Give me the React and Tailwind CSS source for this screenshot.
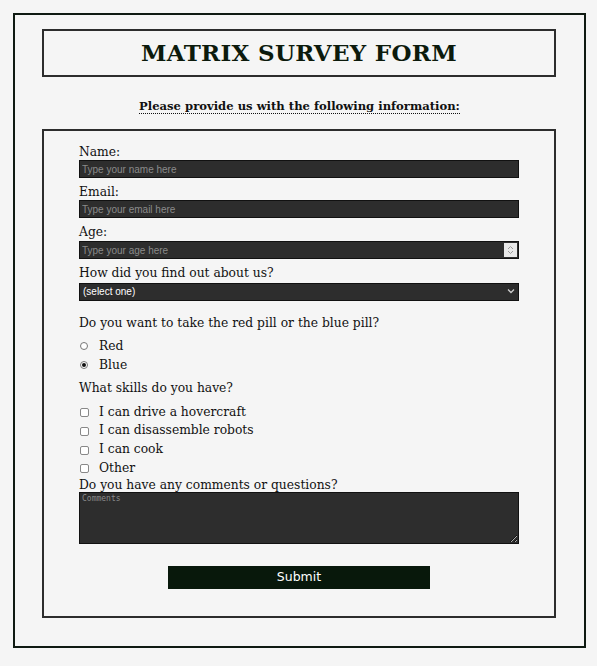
const serif = { fontFamily: '"DejaVu Serif", serif' }

function Field({ label, placeholder, children }) {
  return (
    <div className="mb-[6px]">
      <label className="block h-4 text-[12.3px] leading-4 text-[#111]">{label}</label>
      {children || (
        <input
          type="text"
          placeholder={placeholder}
          className="block w-[440px] h-[18px] bg-[#2d2d2d] border border-[#111] px-[2px] text-[10px] text-white placeholder:text-[#8a8a8a] outline-none font-['Liberation_Sans',sans-serif]"
        />
      )}
    </div>
  )
}

function Radio({ checked, label }) {
  return (
    <div className="flex items-center h-[19px]">
      <span className="w-[8px] h-[8px] ml-[1px] rounded-full border border-[#777] bg-white flex items-center justify-center">
        {checked && <span className="w-[4px] h-[4px] rounded-full bg-[#111]" />}
      </span>
      <span className="ml-[11px] text-[12.3px] text-[#111]">{label}</span>
    </div>
  )
}

function Check({ label }) {
  return (
    <div className="flex items-center h-[18.7px]">
      <span className="w-[9px] h-[9px] ml-[1px] mt-[2px] rounded-[2px] border border-[#888] bg-white" />
      <span className="ml-[10px] text-[12.3px] text-[#111]">{label}</span>
    </div>
  )
}

export default function App() {
  return (
    <div className="min-h-screen bg-[#f5f5f5] pt-[13px] pb-[17px]" style={serif}>
      <div className="ml-[13px] w-[573px] border-2 border-[#0f1a12] pt-[14px] pb-[28px] px-[27px]">

        {/* Header */}
        <div className="w-[514px] h-[48px] border-2 border-[#2d2d2d] flex items-center justify-center">
          <h1 className="text-[23px] font-bold text-[#0c1a0c] tracking-[0.3px]">MATRIX SURVEY FORM</h1>
        </div>

        <p className="mt-[21px] mb-[14px] text-center text-[11.6px] font-bold text-[#111]">
          <span className="border-b border-dotted border-[#111]">Please provide us with the following information:</span>
        </p>

        {/* Form */}
        <form className="w-[514px] h-[489px] border-2 border-[#2d2d2d] pt-[13px] px-[35px]">
          <Field label="Name:" placeholder="Type your name here" />
          <Field label="Email:" placeholder="Type your email here" />
          <Field label="Age:">
            <div className="relative w-[440px] h-[18px] mt-[1px]">
              <input
                type="text"
                placeholder="Type your age here"
                className="block w-full h-full bg-[#2d2d2d] border border-[#111] px-[2px] text-[10px] text-white placeholder:text-[#8a8a8a] outline-none font-['Liberation_Sans',sans-serif]"
              />
              <span className="absolute right-[2px] top-[2px] w-[13px] h-[14px] bg-[#e8e8e8] flex flex-col items-center justify-center">
                <svg width="7" height="10" viewBox="0 0 7 10" fill="none" stroke="#999" strokeWidth="1">
                  <path d="M1 4 L3.5 1.5 L6 4" />
                  <path d="M1 6 L3.5 8.5 L6 6" />
                </svg>
              </span>
            </div>
          </Field>
          <Field label="How did you find out about us?">
            <div className="relative w-[440px] h-[18px] mt-[2px]">
              <div className="w-full h-full bg-[#2d2d2d] border border-[#111] px-[3px] text-[10px] leading-[16px] text-white font-['Liberation_Sans',sans-serif]">
                (select one)
              </div>
              <svg className="absolute right-[4px] top-[5px]" width="8" height="6" viewBox="0 0 8 6" fill="none" stroke="#ccc" strokeWidth="1.3">
                <path d="M1 1.5 L4 4.5 L7 1.5" />
              </svg>
            </div>
          </Field>

          <p className="mt-[14px] text-[12.3px] text-[#111] leading-4">Do you want to take the red pill or the blue pill?</p>
          <div className="mt-[5px]">
            <Radio label="Red" />
            <Radio label="Blue" checked />
          </div>

          <p className="mt-[6px] text-[12.3px] text-[#111] leading-4">What skills do you have?</p>
          <div className="mt-[6px]">
            <Check label="I can drive a hovercraft" />
            <Check label="I can disassemble robots" />
            <Check label="I can cook" />
            <Check label="Other" />
          </div>

          <p className="text-[12.3px] text-[#111] leading-4">Do you have any comments or questions?</p>
          <textarea
            placeholder="Comments"
            className="block w-[440px] h-[52px] mt-[-1px] bg-[#2d2d2d] border border-[#111] px-[2px] text-[8px] text-white placeholder:text-[#8a8a8a] outline-none font-['DejaVu_Sans_Mono',monospace]"
          />

          <div className="flex justify-center mt-[22px]">
            <button type="button" className="w-[262px] h-[23px] bg-[#08180b] text-white text-[12.5px] font-['DejaVu_Sans',sans-serif]">
              Submit
            </button>
          </div>
        </form>
      </div>
    </div>
  )
}
